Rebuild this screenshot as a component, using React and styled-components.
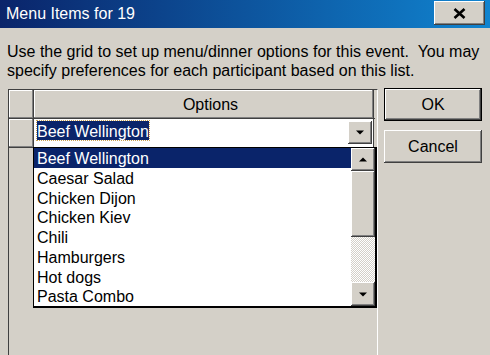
import styled, { createGlobalStyle, css } from "styled-components";

const GlobalStyle = createGlobalStyle`
  html, body {
    margin: 0;
    padding: 0;
    background: #d4d0c8;
    overflow: hidden;
  }
  body {
    font-family: "Liberation Sans", Arial, sans-serif;
    font-size: 16px;
    color: #000;
  }
`;

const raised = css`
  background: #d4d0c8;
  box-shadow: inset -1px -1px #404040, inset 1px 1px #fff,
    inset -2px -2px #808080, inset 2px 2px #d4d0c8;
`;

const Dialog = styled.div`
  width: 490px;
  height: 355px;
  overflow: hidden;
  display: flex;
  flex-direction: column;
  background: #d4d0c8;
`;

const TitleBar = styled.div`
  height: 28px;
  flex: none;
  display: flex;
  align-items: flex-start;
  justify-content: space-between;
  padding: 0 5px 0 6px;
  background: linear-gradient(to right, #0a246a, #1084d0);
  color: #fff;
`;

const Title = styled.span`
  line-height: 27px;
`;

const CloseButton = styled.button`
  ${raised};
  border: none;
  margin-top: 1px;
  width: 51px;
  height: 24px;
  padding: 0;
  display: flex;
  align-items: center;
  justify-content: center;
`;

const Description = styled.p`
  margin: 14px 0 0 7px;
  line-height: 19px;
  white-space: nowrap;
`;

const Content = styled.div`
  display: flex;
  align-items: flex-start;
  gap: 6px;
  padding: 0 8px;
  margin-top: 9px;
`;

const GridPanel = styled.div`
  position: relative;
  width: 368px;
  height: 280px;
  flex: none;
  border: 1px solid;
  border-color: #404040 #fff #fff #404040;
  background: #d4d0c8;
`;

const GridRow = styled.div`
  display: flex;
  width: 366px;
  border-bottom: 1px solid #404040;
`;

const RowHeader = styled.div`
  background: #d4d0c8;
  box-shadow: inset -1px -1px #808080, inset 1px 1px #fff;
  width: 24px;
  height: 28px;
  border-right: 1px solid #404040;
`;

const HeaderCell = styled.div`
  background: #d4d0c8;
  box-shadow: inset -1px -1px #808080, inset 1px 1px #fff;
  width: 340px;
  height: 28px;
  border-right: 1px solid #404040;
  display: flex;
  align-items: center;
  justify-content: center;
  padding: 2px 0 0 14px;
  box-sizing: border-box;
`;

const EditCell = styled.div`
  background: #fff;
  width: 340px;
  height: 28px;
  border-right: 1px solid #404040;
  display: flex;
  align-items: flex-start;
  justify-content: space-between;
  padding: 2px 1px 0 3px;
  box-sizing: border-box;
`;

const SelectedText = styled.span`
  background: #0a246a;
  color: #fff;
  height: 19px;
  line-height: 21px;
  outline: 1px dotted #c8a050;
`;

const ArrowButton = styled.div`
  ${raised};
  width: 24px;
  height: ${(p) => p.$h || 23}px;
  flex: none;
  display: flex;
  align-items: center;
  justify-content: center;
`;

const ListBox = styled.div`
  position: absolute;
  left: 24px;
  top: 57px;
  width: 341px;
  height: 158px;
  border: 1px solid #000;
  border-right-width: 2px;
  border-bottom-width: 2px;
  background: #fff;
  display: flex;
`;

const Items = styled.ul`
  list-style: none;
  margin: 0;
  padding: 0;
  flex: 1;
`;

const Item = styled.li`
  height: 19.75px;
  box-sizing: border-box;
  padding: 2px 0 0 3px;
  line-height: 17.75px;
  white-space: nowrap;
  overflow: visible;
  background: ${(p) => (p.$selected ? "#0a246a" : "#fff")};
  color: ${(p) => (p.$selected ? "#fff" : "#000")};
`;

const ScrollBar = styled.div`
  width: 24px;
  display: flex;
  flex-direction: column;
`;

const Thumb = styled.div`
  ${raised};
  height: 66px;
`;

const Track = styled.div`
  flex: 1;
  background: repeating-conic-gradient(#d4d0c8 0 25%, #fff 0 50%) 0 0 / 2px
    2px;
`;

const ButtonColumn = styled.div`
  display: flex;
  flex-direction: column;
  gap: 9px;
  margin-top: -1px;
`;

const DialogButton = styled.button`
  ${raised};
  width: 98px;
  height: 33px;
  border: ${(p) => (p.$default ? "1px solid #000" : "none")};
  font-family: inherit;
  font-size: 16px;
  color: #000;
  padding: 0;
`;

const Arrow = ({ up }) => (
  <svg width="8" height="5" viewBox="0 0 8 5">
    <polygon
      points={up ? "0,4.5 8,4.5 4,0.5" : "0,0.5 8,0.5 4,4.5"}
      fill="#000"
    />
  </svg>
);

const options = [
  "Beef Wellington",
  "Caesar Salad",
  "Chicken Dijon",
  "Chicken Kiev",
  "Chili",
  "Hamburgers",
  "Hot dogs",
  "Pasta Combo",
];

export default function App() {
  return (
    <>
      <GlobalStyle />
      <Dialog>
        <TitleBar>
          <Title>Menu Items for 19</Title>
          <CloseButton aria-label="Close">
            <svg width="13" height="11" viewBox="0 0 13 11">
              <path
                d="M1.5 1 L11.5 10 M11.5 1 L1.5 10"
                stroke="#000"
                strokeWidth="2.6"
              />
            </svg>
          </CloseButton>
        </TitleBar>
        <Description>
          Use the grid to set up menu/dinner options for this event.{"\u00a0 "}You may
          <br />
          specify preferences for each participant based on this list.
        </Description>
        <Content>
          <GridPanel>
            <GridRow>
              <RowHeader />
              <HeaderCell>Options</HeaderCell>
            </GridRow>
            <GridRow>
              <RowHeader />
              <EditCell>
                <SelectedText>Beef Wellington</SelectedText>
                <ArrowButton>
                  <Arrow />
                </ArrowButton>
              </EditCell>
            </GridRow>
            <ListBox>
              <Items>
                {options.map((o, i) => (
                  <Item key={o} $selected={i === 0}>
                    {o}
                  </Item>
                ))}
              </Items>
              <ScrollBar>
                <ArrowButton>
                  <Arrow up />
                </ArrowButton>
                <Thumb />
                <Track />
                <ArrowButton $h={24}>
                  <Arrow />
                </ArrowButton>
              </ScrollBar>
            </ListBox>
          </GridPanel>
          <ButtonColumn>
            <DialogButton $default>OK</DialogButton>
            <DialogButton>Cancel</DialogButton>
          </ButtonColumn>
        </Content>
      </Dialog>
    </>
  );
}
